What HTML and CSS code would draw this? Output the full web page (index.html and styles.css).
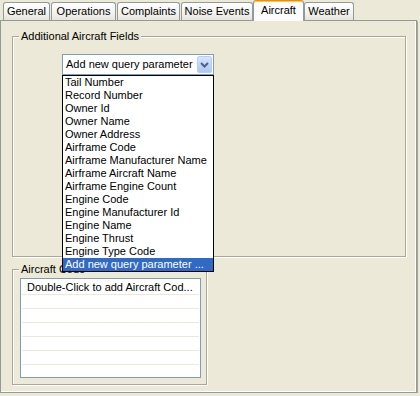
FILE: index.html
```html
<!DOCTYPE html>
<html lang="en">
<head>
    <meta charset="UTF-8">
    <title>Query - Aircraft</title>
    <link rel="stylesheet" href="styles.css">
</head>
<body>

<div class="tabs">
    <div class="tab tab-general">General</div>
    <div class="tab tab-operations">Operations</div>
    <div class="tab tab-complaints">Complaints</div>
    <div class="tab tab-noise">Noise Events</div>
    <div class="tab tab-aircraft selected">Aircraft</div>
    <div class="tab tab-weather">Weather</div>
</div>

<div class="panel">
    <fieldset class="group group-fields">
        <legend>Additional Aircraft Fields</legend>
        <div class="combo">
            <span class="combo-text">Add new query parameter</span>
            <span class="combo-btn">
                <svg width="13" height="15" viewBox="0 0 13 15">
                    <path d="M3 6 L6.5 9.5 L10 6" fill="none" stroke="#4d6185" stroke-width="2"/>
                </svg>
            </span>
            <ul class="dropdown">
                <li>Tail Number</li>
                <li>Record Number</li>
                <li>Owner Id</li>
                <li>Owner Name</li>
                <li>Owner Address</li>
                <li>Airframe Code</li>
                <li>Airframe Manufacturer Name</li>
                <li>Airframe Aircraft Name</li>
                <li>Airframe Engine Count</li>
                <li>Engine Code</li>
                <li>Engine Manufacturer Id</li>
                <li>Engine Name</li>
                <li>Engine Thrust</li>
                <li>Engine Type Code</li>
                <li class="active">Add new query parameter ...</li>
            </ul>
        </div>
    </fieldset>

    <fieldset class="group group-codes">
        <legend>Aircraft Code</legend>
        <div class="listbox">
            <div class="row">Double-Click to add Aircraft Cod...</div>
            <div class="row"></div>
            <div class="row"></div>
            <div class="row"></div>
            <div class="row"></div>
            <div class="row"></div>
        </div>
    </fieldset>
</div>

</body>
</html>
```

FILE: styles.css
```css
body {
    margin: 0;
    padding: 0;
    background-color: #ece9d8;
    font-family: "Liberation Sans", Arial, sans-serif;
    font-size: 11px;
    color: #000;
}
.tabs {
    display: flex;
    align-items: flex-start;
    height: 20px;
    padding-left: 3px;
}
.tab {
    box-sizing: border-box;
    height: 18px;
    margin-top: 2px;
    margin-right: 1px;
    border: 1px solid #919b9c;
    border-bottom: none;
    border-radius: 3px 3px 0 0;
    background: linear-gradient(#ffffff, #f3f2ed 60%, #e6e4dc);
    text-align: center;
    line-height: 17px;
}
.tab-general { width: 47px; }
.tab-operations { width: 65px; }
.tab-complaints { width: 63px; }
.tab-noise { width: 72px; margin-right: 0; }
.tab-aircraft { width: 51px; }
.tab-weather { width: 50px; }
.tab.selected {
    position: relative;
    z-index: 1;
    height: 21px;
    margin-top: 0;
    margin-right: 0;
    border-top: 1px solid #e68b2c;
    box-shadow: inset 0 1px 0 #ffc73c;
    background: #fcfcfe;
    line-height: 16px;
    padding-top: 1px;
}
.panel {
    box-sizing: border-box;
    width: 417px;
    height: 373px;
    border: 1px solid #919b9c;
    box-shadow: 1px 1px 0 #aca899, inset -1px -1px 0 #ffffff;
    padding: 9px 0 0 11px;
}
.group {
    box-sizing: border-box;
    margin: 0;
    padding: 0;
    border: 1px solid #aca899;
    box-shadow: 1px 1px 0 #ffffff, inset 1px 1px 0 #ffffff;
    min-width: 0;
}
.group legend {
    margin-left: 6px;
    padding: 0 2px;
    line-height: 13px;
    background-color: #ece9d8;
}
.group-fields {
    width: 394px;
    height: 227px;
}
.group-codes {
    width: 195px;
    height: 122px;
    margin-top: 6px;
}
.combo {
    position: relative;
    box-sizing: border-box;
    display: flex;
    width: 152px;
    height: 21px;
    margin: 11px 0 0 49px;
    padding: 1px;
    border: 1px solid #7f9db9;
    background-color: #ffffff;
}
.combo-text {
    flex: 1;
    padding-left: 2px;
    line-height: 17px;
}
.combo-btn {
    box-sizing: border-box;
    display: flex;
    align-items: center;
    justify-content: center;
    width: 15px;
    height: 17px;
    border: 1px solid #bccdf5;
    border-radius: 2px;
    background: linear-gradient(#d9e4fd, #bfd1fb 60%, #b1c6f6);
}
.dropdown {
    position: absolute;
    left: -1px;
    top: 20px;
    box-sizing: border-box;
    width: 152px;
    margin: 0;
    padding: 0;
    list-style: none;
    border: 1px solid #000000;
    background-color: #ffffff;
}
.dropdown li {
    height: 13px;
    line-height: 13px;
    padding-left: 2px;
    white-space: nowrap;
}
.dropdown li.active {
    background-color: #316ac5;
    color: #ffffff;
}
.listbox {
    box-sizing: border-box;
    width: 181px;
    height: 100px;
    margin: 2px 0 0 7px;
    padding: 2px 1px 0;
    border: 1px solid #7f9db9;
    background-color: #ffffff;
}
.row {
    height: 13px;
    line-height: 13px;
    padding-left: 5px;
    border-bottom: 1px solid #ebe8dc;
    white-space: nowrap;
}
```
